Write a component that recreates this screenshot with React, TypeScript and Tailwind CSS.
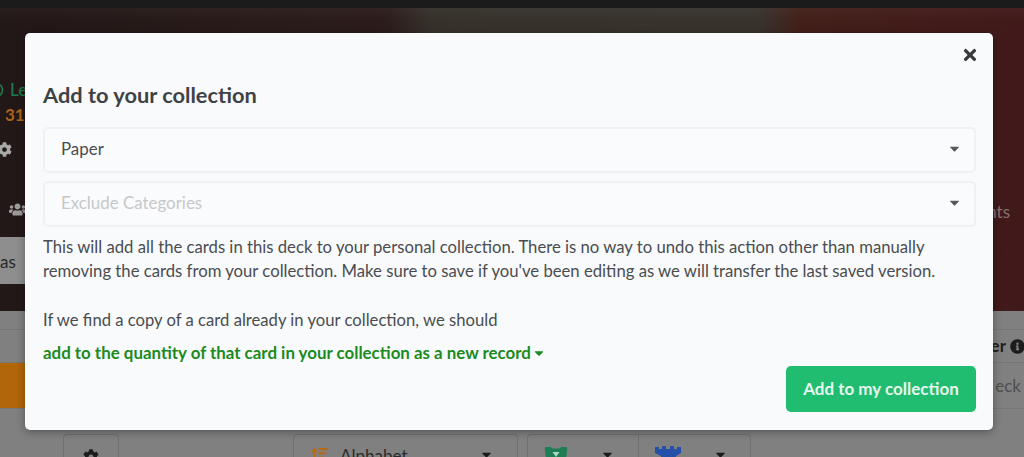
import React from "react";
import { FaCog, FaUsers, FaInfoCircle, FaTimes, FaCaretDown, FaSortAmountUp } from "react-icons/fa";

function Select({ label, muted }: { label: string; muted?: boolean }) {
  return (
    <div className="flex h-[46px] items-center justify-between rounded-[5px] border-2 border-[#f0f1f3] bg-[#fafbfc] pb-[2px] pl-[16px] pr-[12px] text-[16.9px]">
      <span className={muted ? "text-[#c6c8ca]" : "text-[#4a4d50]"}>{label}</span>
      <FaCaretDown className="mb-[2px] text-[15px] text-[#55585b]" />
    </div>
  );
}

function Tab({ className, children }: { className: string; children?: React.ReactNode }) {
  return <div className={"relative h-[24px] shrink-0 border border-b-0 border-[#6f6f6f] " + className}>{children}</div>;
}

export default function App() {
  return (
    <div className="relative h-[457px] w-[1024px] overflow-hidden bg-[#808080] font-['Lato','Liberation_Sans',sans-serif] text-[17px]">
      <div className="h-[8px] bg-[#1b1b1b]" />
      <div className="relative h-[303px] bg-[linear-gradient(180deg,rgba(255,255,255,0.03),rgba(255,255,255,0)_12px),linear-gradient(90deg,#221817_0%,#2c1d1b_38%,#36312b_42%,#38332d_74%,#43201a_78%,#41191a_100%)]">
        <div className="flex items-center pt-[71px] text-[17px] font-medium leading-[22px] text-[#1d7a50]">
          <svg width="16" height="16" viewBox="0 0 16 16" className="ml-[-12px]" aria-hidden="true">
            <circle cx="8" cy="8" r="6.5" fill="none" stroke="currentColor" strokeWidth="1.6" />
          </svg>
          <span className="ml-[6px]">Le</span>
        </div>
        <div className="mt-[4px] pl-[5px] text-[17px] font-bold leading-[20px] text-[#ab6417]">31</div>
        <FaCog className="ml-[-3px] mt-[17px] text-[15px] text-[#a8a8a8]" />
        <FaUsers className="ml-[9px] mt-[44px] text-[17px] text-[#9c9c9c]" />
        <div className="mt-[19px] flex h-[47px] w-[30px] items-center bg-[#8e8e8e] pt-[2px] text-[17px] leading-none text-[#2a2a2a]">as</div>
        <div className="absolute right-[14px] top-[191px] text-[17px] text-[#85716f]">ents</div>
      </div>
      <div className="h-[146px]">
        <div className="h-[19px] border-b border-[#767676]" />
        <div className="flex h-[33px] items-center justify-end border-b border-[#767676] text-[17px] font-bold text-[#1f1f1f]">
          <span>er</span>
          <FaInfoCircle className="ml-[4px] mr-[-1px] text-[15px] text-[#1c1c1c]" />
        </div>
        <div className="flex h-[46px] items-center justify-between border-b border-[#767676]">
          <div className="h-full w-[30px] bg-[#b1660a]" />
          <span className="mr-[3px] text-[17px] text-[#4f4f4f]">eck</span>
        </div>
        <div className="flex pl-[63px] pt-[25px]">
          <Tab className="w-[56px] rounded-t-[4px]">
            <FaCog className="absolute left-[19px] top-[14px] text-[16px] text-[#1d1d1d]" />
          </Tab>
          <Tab className="ml-[174px] w-[225px] rounded-t-[4px]">
            <FaSortAmountUp className="absolute left-[17px] top-[12px] text-[17px] text-[#b56a18]" />
            <span className="absolute left-[46px] top-[8px] text-[17px] text-[#2b2b2b]">Alphabet</span>
            <FaCaretDown className="absolute right-[23px] top-[12px] text-[15px] text-[#1b1b1b]" />
          </Tab>
          <Tab className="ml-[9px] w-[112px] rounded-tl-[4px]">
            <svg width="24" height="20" viewBox="0 0 24 20" className="absolute left-[16px] top-[11px] text-[#1f7d55]" aria-hidden="true">
              <path d="M2 1h5l1 1.500h8L17 1h5c1 0 1.500 1 1.300 2L21 20H3L.7 3C.5 2 1 1 2 1z" fill="currentColor" />
              <path d="M8.500 6h7l-3.500 5z" fill="#a8d8c2" />
            </svg>
            <FaCaretDown className="absolute right-[23px] top-[12px] text-[15px] text-[#1b1b1b]" />
          </Tab>
          <Tab className="w-[112px] rounded-tr-[4px] border-l-0">
            <svg width="26" height="20" viewBox="0 0 26 20" className="absolute left-[16px] top-[11px] text-[#2450a8]" aria-hidden="true">
              <path d="M0 1h4v2h3V0h4v3h4V0h4v3h3V1h4v6l-5 3v10H6V10L0 7z" fill="currentColor" />
            </svg>
            <FaCaretDown className="absolute right-[22px] top-[12px] text-[15px] text-[#1b1b1b]" />
          </Tab>
        </div>
      </div>

      <div className="absolute left-[25px] top-[33px] h-[397px] w-[968px] rounded-[5px] bg-[#f9fafc] pl-[18px] pr-[17px] pt-[49px] shadow-[0_2px_8px_rgba(0,0,0,0.35)]">
        <FaTimes className="absolute right-[14px] top-[13px] text-[18px] text-[#37393c]" />
        <h2 className="text-[21.8px] font-bold leading-[26px] text-[#3f4245]">Add to your collection</h2>
        <div className="mt-[19px] flex flex-col gap-[8px]">
          <Select label="Paper" />
          <Select label="Exclude Categories" muted />
        </div>
        <p className="mt-[8px] text-[16.7px] leading-[24px] text-[#4a4d50]">
          This will add all the cards in this deck to your personal collection. There is no way to undo this action other than manually removing the cards from your collection. Make sure to save if you've been editing as we will transfer the last saved version.
        </p>
        <p className="mt-[25px] text-[16.65px] leading-[24px] text-[#4a4d50]">If we find a copy of a card already in your collection, we should</p>
        <div className="mt-[9px] flex items-center text-[16.9px] font-bold leading-[24px] text-[#1b8a1f]">
          add to the quantity of that card in your collection as a new record
          <FaCaretDown className="ml-[1px] text-[14px]" />
        </div>
        <div className="mt-[1px] flex justify-end">
          <button className="h-[46px] w-[190px] rounded-[5px] bg-[#20bd70] font-bold text-[#e6f7ee]">Add to my collection</button>
        </div>
      </div>
    </div>
  );
}
